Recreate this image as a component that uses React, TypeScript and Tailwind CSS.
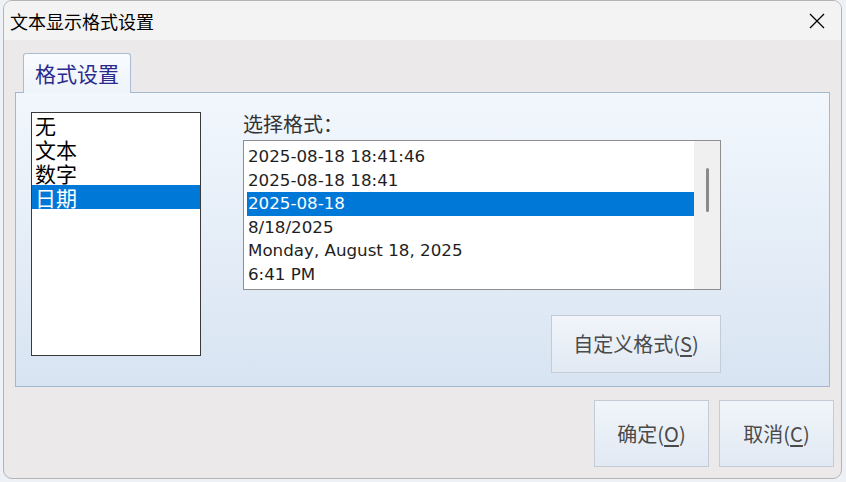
import React, { useState } from 'react';

const cjk = { fontFamily: '"Noto Sans CJK SC", "Noto Sans", sans-serif' };
const latin = { fontFamily: '"DejaVu Sans", "Noto Sans CJK SC", sans-serif' };

const typeItems = ['无', '文本', '数字', '日期'];
const formatItems = [
  '2025-08-18 18:41:46',
  '2025-08-18 18:41',
  '2025-08-18',
  '8/18/2025',
  'Monday, August 18, 2025',
  '6:41 PM',
];

// Button with the underlined mnemonic letter
const DlgButton: React.FC<{ label: string; mnemonic: string; className?: string }> = ({ label, mnemonic, className }) => (
  <button
    className={`flex items-center justify-center border border-[#c3cbd6] bg-gradient-to-b from-[#f1f5fa] to-[#e1e9f3] text-[20px] text-[#4a4a4a] ${className ?? ''}`}
    style={cjk}
  >
    {label}(<span className="underline underline-offset-[3px]">{mnemonic}</span>)
  </button>
);

const App: React.FC = () => {
  const [type, setType] = useState(3);
  const [format, setFormat] = useState(2);

  return (
    <div className="w-[846px] h-[482px] bg-[#eef1f5] px-[3px]">
      <div className="w-[839px] h-[479px] rounded-[9px] border border-[#b4b4b4] bg-[#ebe9ea] overflow-hidden flex flex-col">
        {/* title bar */}
        <div className="h-[39px] shrink-0 bg-[#f3f3f3] flex items-center justify-between pl-[6px] pr-[16px]">
          <span className="text-[18px] text-black leading-none" style={cjk}>文本显示格式设置</span>
          <svg width="16" height="16" viewBox="0 0 16 16" className="text-black">
            <path d="M1 1L15 15M15 1L1 15" stroke="currentColor" strokeWidth="1.3" />
          </svg>
        </div>

        <div className="flex-1 flex flex-col px-[11px] pt-[13px]">
          {/* tab strip */}
          <div className="flex pl-[8px] h-[39px]">
            <div className="relative z-10 w-[108px] h-[40px] rounded-t-[3px] border border-b-0 border-[#a9bcd4] bg-gradient-to-b from-[#f9fbfe] to-[#eef4fb] flex items-center justify-center">
              <span className="text-[21px] text-[#2a2a8e] leading-none" style={cjk}>格式设置</span>
            </div>
          </div>

          {/* tab page */}
          <div className="h-[295px] border border-[#a3b7cf] bg-gradient-to-b from-[#f2f7fd] to-[#d8e4f2] flex pl-[15px] pt-[19px]">
            <div className="w-[170px] h-[244px] border-[1.5px] border-[#3a3a3a] bg-white" style={cjk}>
              {typeItems.map((t, i) => (
                <div
                  key={t}
                  onClick={() => setType(i)}
                  className={`h-[24px] pl-[3px] text-[21px] leading-[24px] ${i === type ? 'bg-[#0078d7] text-white' : 'text-black'}`}
                >
                  {t}
                </div>
              ))}
            </div>

            <div className="ml-[42px] flex flex-col">
              <div className="h-[28px] text-[20px] leading-[24px] text-[#333]" style={cjk}>选择格式：</div>
              <div className="w-[478px] h-[150px] border border-[#8e8e8e] bg-white flex p-[3px] pr-0">
                <div className="flex-1 pt-[1px]" style={latin}>
                  {formatItems.map((f, i) => (
                    <div
                      key={f}
                      onClick={() => setFormat(i)}
                      className={`h-[23.5px] pl-[1px] text-[16.7px] leading-[23px] ${i === format ? 'bg-[#0078d7] text-white' : 'text-[#1e1e1e]'}`}
                    >
                      {f}
                    </div>
                  ))}
                </div>
                <div className="w-[26px] -mt-[3px] h-[148px] bg-[#f0f0f0] flex justify-center pt-[27px]">
                  <div className="w-[3px] h-[44px] rounded-full bg-[#8a8a8a]" />
                </div>
              </div>
              <div className="flex justify-end mt-[25px]">
                <DlgButton label="自定义格式" mnemonic="S" className="w-[170px] h-[58px]" />
              </div>
            </div>
          </div>

          {/* bottom buttons */}
          <div className="flex justify-end gap-[10px] mt-[13px] -mr-[4px]">
            <DlgButton label="确定" mnemonic="O" className="w-[115px] h-[67px]" />
            <DlgButton label="取消" mnemonic="C" className="w-[115px] h-[67px]" />
          </div>
        </div>
      </div>
    </div>
  );
};

export default App;
